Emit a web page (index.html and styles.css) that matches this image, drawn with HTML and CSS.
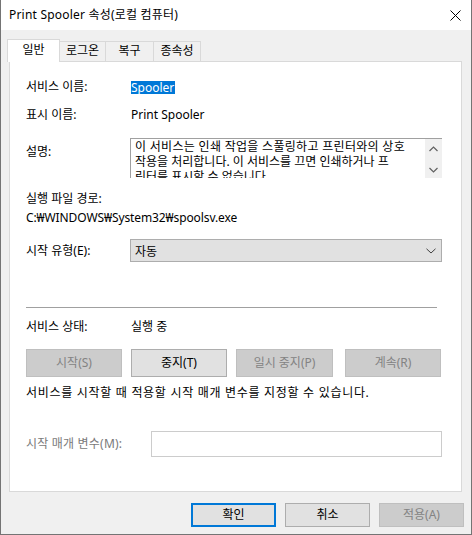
FILE: index.html
```html
<!DOCTYPE html>
<html lang="ko">
<head>
<meta charset="utf-8">
<title>Print Spooler 속성(로컬 컴퓨터)</title>
<link rel="stylesheet" href="styles.css">
</head>
<body>
<div class="window">
  <div class="titlebar">
    <span class="title">Print Spooler 속성(로컬 컴퓨터)</span>
    <svg class="close" width="11" height="11" viewBox="0 0 11 11"><path d="M0.5 0.5 L10.5 10.5 M10.5 0.5 L0.5 10.5" stroke="#000" stroke-width="1" fill="none"/></svg>
  </div>
  <div class="client">
    <div class="tabs">
      <div class="tab tab-active t1">일반</div>
      <div class="tab t2">로그온</div>
      <div class="tab t3">복구</div>
      <div class="tab t4">종속성</div>
    </div>
    <div class="panel">
      <div class="row r-name">
        <span class="label">서비스 이름:</span>
        <span class="selected">Spooler</span>
      </div>
      <div class="row r-display">
        <span class="label">표시 이름:</span>
        <span class="value">Print Spooler</span>
      </div>
      <div class="row r-desc">
        <span class="label desc-label">설명:</span>
        <div class="desc-box">
          <div class="desc-text"><span class="dl1">이 서비스는 인쇄 작업을 스풀링하고 프린터와의 상호</span><br>작용을 처리합니다. 이 서비스를 끄면 인쇄하거나 프<br>린터를 표시할 수 없습니다.</div>
          <div class="scrollbar">
            <svg width="9" height="6" viewBox="0 0 9 6"><path d="M0.5 5 L4.5 1 L8.5 5" stroke="#606060" stroke-width="1.2" fill="none"/></svg>
            <svg width="9" height="6" viewBox="0 0 9 6"><path d="M0.5 1 L4.5 5 L8.5 1" stroke="#606060" stroke-width="1.2" fill="none"/></svg>
          </div>
        </div>
      </div>
      <div class="line r-pathlabel">실행 파일 경로:</div>
      <div class="line r-path">C:₩WINDOWS₩System32₩spoolsv.exe</div>
      <div class="row r-start">
        <span class="label">시작 유형(E):</span>
        <div class="select">
          <span>자동</span>
          <svg width="10" height="6" viewBox="0 0 10 6"><path d="M0.5 0.8 L5 5 L9.5 0.8" stroke="#404040" stroke-width="1" fill="none"/></svg>
        </div>
      </div>
      <div class="separator"></div>
      <div class="row r-status">
        <span class="label">서비스 상태:</span>
        <span class="value">실행 중</span>
      </div>
      <div class="buttons">
        <div class="btn btn-disabled b-start">시작(S)</div>
        <div class="btn b-stop">중지(T)</div>
        <div class="btn btn-disabled b-pause">일시 중지(P)</div>
        <div class="btn btn-disabled b-resume">계속(R)</div>
      </div>
      <div class="line r-hint">서비스를 시작할 때 적용할 시작 매개 변수를 지정할 수 있습니다.</div>
      <div class="row r-param">
        <span class="label label-disabled">시작 매개 변수(M):</span>
        <div class="param-input"></div>
      </div>
    </div>
    <div class="footer">
      <div class="btn fbtn btn-default">확인</div>
      <div class="btn fbtn">취소</div>
      <div class="btn fbtn btn-disabled">적용(A)</div>
    </div>
  </div>
</div>
</body>
</html>
```

FILE: styles.css
```css
* { box-sizing: border-box; }
html, body { margin: 0; padding: 0; }
body {
  width: 472px;
  height: 535px;
  font-family: "Noto Sans", "Noto Sans CJK KR", sans-serif;
  font-size: 12px;
  color: #000;
  background: #fff;
}
.window {
  width: 472px;
  height: 535px;
  background: #f0f0f0;
  border: 1px solid #747474;
  border-top: none;
  display: flex;
  flex-direction: column;
}
.titlebar {
  height: 30px;
  background: #fff;
  display: flex;
  align-items: center;
  padding-left: 8px;
}
.title { line-height: 16px; letter-spacing: 0.2px; }
.close { margin-left: auto; margin-right: 10px; margin-top: 1px; }
.client {
  flex: 1;
  padding: 9px 8px 0 7px;
  display: flex;
  flex-direction: column;
}
.tabs {
  display: flex;
  align-items: flex-end;
  height: 22px;
  position: relative;
  z-index: 2;
}
.tab {
  height: 20px;
  background: #f0f0f0;
  border: 1px solid #d9d9d9;
  border-bottom: none;
  margin-left: -1px;
  text-align: center;
  line-height: 18px;
}
.tab-active {
  height: 23px;
  margin-bottom: -1px;
  background: #fff;
  position: relative;
  z-index: 3;
  line-height: 20px;
}
.t1 { width: 53px; }
.t2 { width: 47px; }
.t3 { width: 49px; }
.t4 { width: 48px; }
.panel {
  height: 431px;
  background: #fff;
  border: 1px solid #d9d9d9;
  margin-left: 1px;
  margin-right: 1px;
  padding: 17px 0 0 16px;
  display: flex;
  flex-direction: column;
  position: relative;
  z-index: 1;
}
.row { display: flex; align-items: center; }
.label { width: 104px; flex: none; line-height: 16px; }
.value { padding-left: 1px; line-height: 16px; }
.line { line-height: 16px; }
.r-name { height: 16px; }
.selected {
  margin-left: 1px;
  background: #0078d7;
  color: #fff;
  height: 13px;
  line-height: 13px;
  padding: 0 1px 0 0;
}
.r-display { margin-top: 12px; }
.r-desc { margin-top: 15px; align-items: flex-start; }
.desc-label { margin-top: 6px; }
.desc-box {
  width: 312px;
  height: 40px;
  border-top: 1px solid #a0a0a0;
  border-left: 1px solid #a0a0a0;
  display: flex;
  overflow: hidden;
}
.desc-text {
  flex: 1;
  padding: 0 0 0 4px;
  line-height: 15px;
  white-space: nowrap;
  overflow: hidden;
}
.dl1 { letter-spacing: 0.3px; }
.scrollbar {
  width: 17px;
  background: #f0f0f0;
  display: flex;
  flex-direction: column;
  align-items: center;
  justify-content: space-between;
  padding: 7px 0 5px;
}
.r-pathlabel { margin-top: 13px; }
.r-path { margin-top: 3px; letter-spacing: -0.1px; }
.r-start { margin-top: 13px; }
.select {
  width: 312px;
  height: 23px;
  background: #e1e1e1;
  border: 1px solid #adadad;
  display: flex;
  align-items: center;
  padding: 0 5px 0 4px;
  justify-content: space-between;
}
.separator {
  margin-top: 45px;
  width: 411px;
  height: 1px;
  background: #a0a0a0;
}
.r-status { margin-top: 11px; }
.buttons { display: flex; margin-top: 14px; }
.btn {
  height: 28px;
  background: #e1e1e1;
  border: 1px solid #adadad;
  display: flex;
  align-items: center;
  justify-content: center;
  line-height: 16px;
}
.btn-disabled {
  background: #cccccc;
  border-color: #bfbfbf;
  color: #838383;
}
.b-start { width: 96px; }
.b-stop { width: 96px; margin-left: 9px; }
.b-pause { width: 97px; margin-left: 9px; }
.b-resume { width: 96px; margin-left: 12px; }
.r-hint { margin-top: 8px; letter-spacing: 0.7px; }
.r-param { margin-top: 30px; }
.label-disabled { color: #7a7a7a; width: 125px; letter-spacing: 0.2px; }
.param-input {
  width: 291px;
  height: 26px;
  background: #fff;
  border: 1px solid #cccccc;
}
.footer {
  display: flex;
  justify-content: flex-end;
  margin-top: 11px;
  margin-right: -1px;
}
.fbtn { width: 85px; height: 24px; margin-left: 9px; }
.btn-default { border: 2px solid #0078d7; }
```
